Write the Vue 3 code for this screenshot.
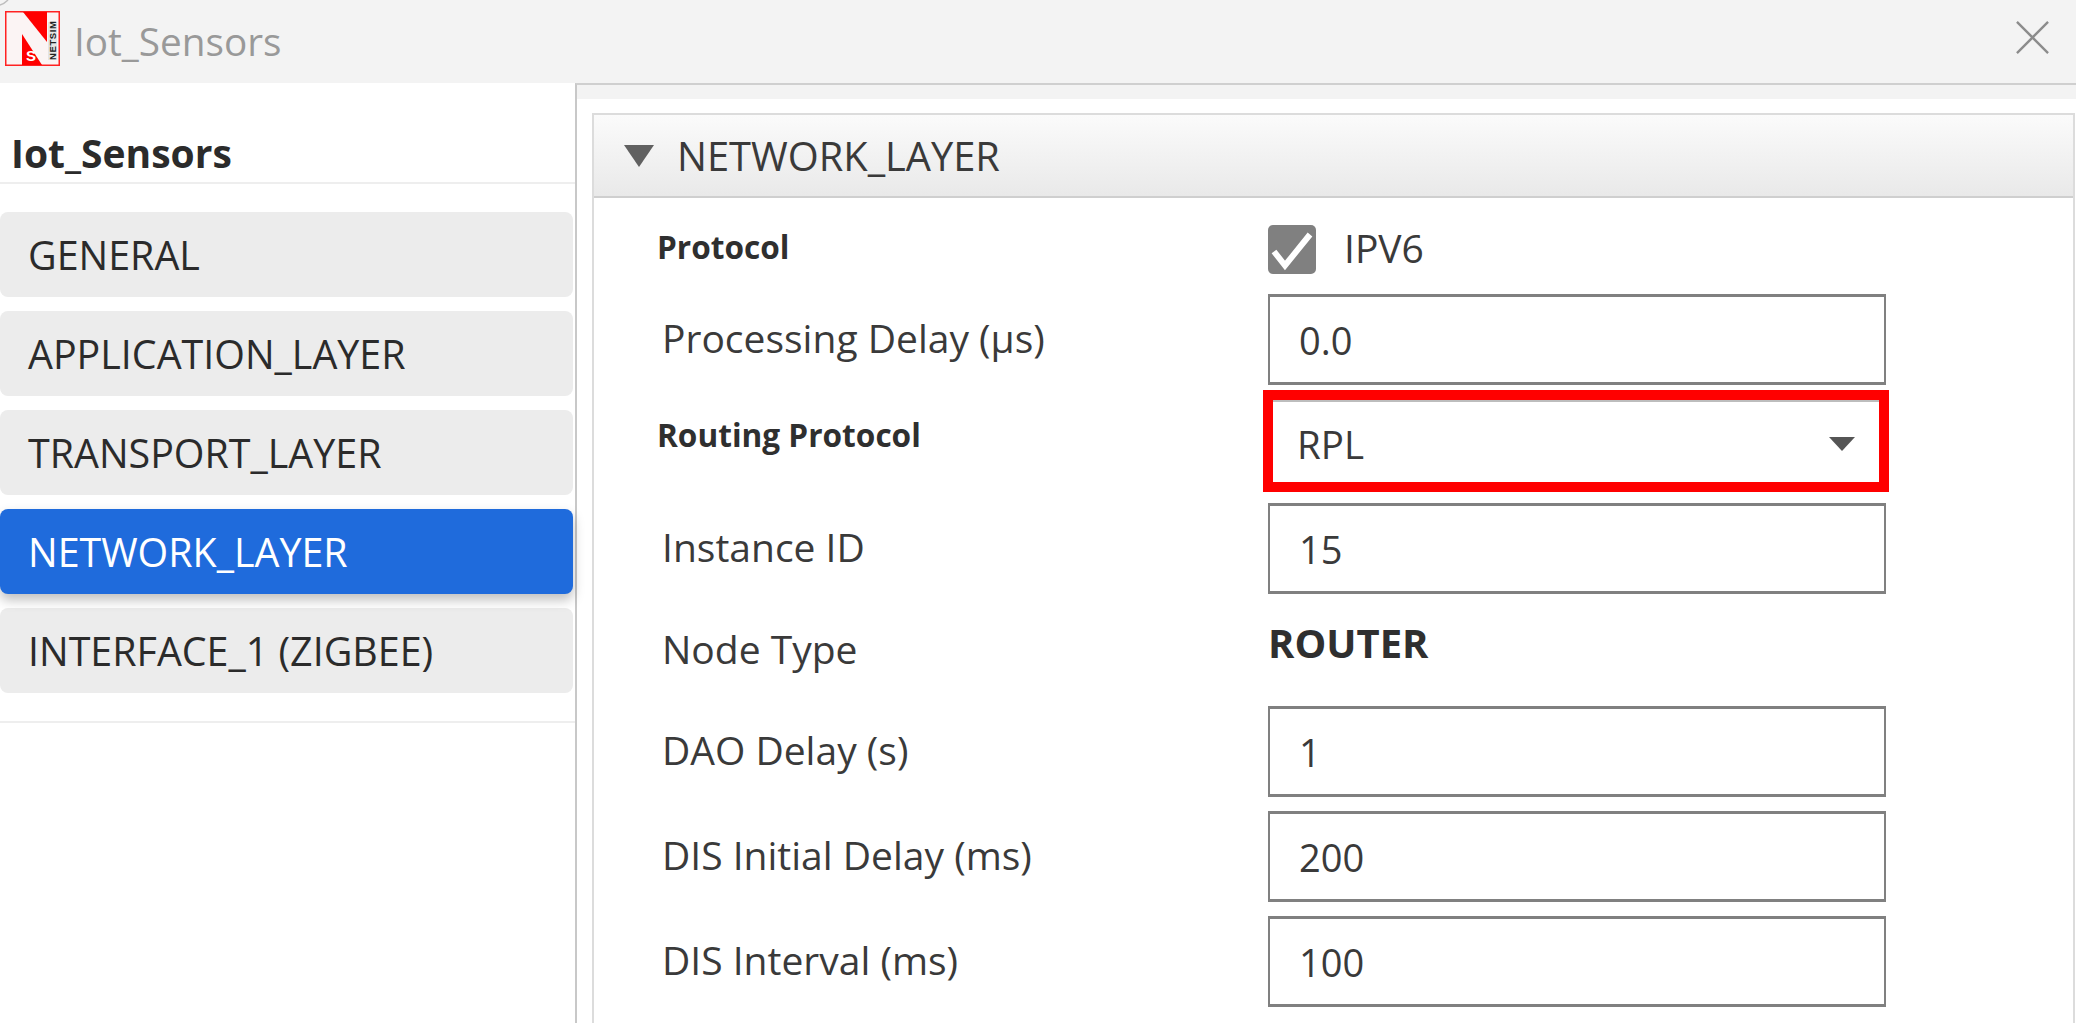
<script setup>
const navItems = [
  { label: 'GENERAL' },
  { label: 'APPLICATION_LAYER' },
  { label: 'TRANSPORT_LAYER' },
  { label: 'NETWORK_LAYER', active: true },
  { label: 'INTERFACE_1 (ZIGBEE)' }
]
</script>

<template>
  <div class="window">
    <header class="titlebar">
      <svg class="corner" viewBox="0 0 10 6" aria-hidden="true">
        <path d="M0 5 Q4 4 8 0" fill="none" stroke="#bdbdbd" stroke-width="1.5" />
      </svg>
      <svg class="logo" viewBox="0 0 55 55" aria-hidden="true">
        <rect x="0.75" y="0.75" width="53.5" height="53.5" fill="#fbf4f4" stroke="#f22" stroke-width="1.5" />
        <path d="M18 1 H42 V31 Z" fill="#f00" />
        <path d="M17 23 L37 54 H17 Z" fill="#f00" />
        <text x="21" y="50" class="logo-s">S</text>
        <rect x="43" y="11" width="9" height="38" fill="#e4e4e4" />
        <text x="0" y="0" class="logo-word" transform="translate(50.5 49) rotate(-90)">NETSIM</text>
      </svg>
      <span class="window-title">Iot_Sensors</span>
      <svg class="close" viewBox="0 0 36 36" aria-hidden="true">
        <path d="M2 2 L34 34 M34 2 L2 34" fill="none" stroke="#8c8c8c" stroke-width="2.4" />
      </svg>
    </header>

    <div class="body">
      <aside class="sidebar">
        <div class="side-head">Iot_Sensors</div>
        <nav class="nav">
          <div v-for="item in navItems" :key="item.label" class="nav-item" :class="{ active: item.active }">
            {{ item.label }}
          </div>
        </nav>
      </aside>

      <main class="pane">
        <div class="pane-strip"></div>
        <section class="panel">
          <div class="panel-head">
            <span class="panel-arrow"></span>
            <span class="panel-title">NETWORK_LAYER</span>
          </div>
          <div class="form">
            <div class="row row-check">
              <label class="lbl bold">Protocol</label>
              <div class="check-wrap">
                <span class="check">
                  <svg viewBox="0 0 48 48" aria-hidden="true">
                    <path d="M6 26 L17 40 L42 9" fill="none" stroke="#fff" stroke-width="6" />
                  </svg>
                </span>
                <span class="check-text">IPV6</span>
              </div>
            </div>
            <div class="row row-input">
              <label class="lbl">Processing Delay (µs)</label>
              <div class="field">0.0</div>
            </div>
            <div class="row row-select">
              <label class="lbl bold up">Routing Protocol</label>
              <div class="highlight">
                <div class="select">
                  <span>RPL</span>
                  <span class="select-arrow"></span>
                </div>
              </div>
            </div>
            <div class="row row-input">
              <label class="lbl">Instance ID</label>
              <div class="field">15</div>
            </div>
            <div class="row row-static">
              <label class="lbl">Node Type</label>
              <div class="static">ROUTER</div>
            </div>
            <div class="row row-input">
              <label class="lbl">DAO Delay (s)</label>
              <div class="field">1</div>
            </div>
            <div class="row row-input">
              <label class="lbl">DIS Initial Delay (ms)</label>
              <div class="field">200</div>
            </div>
            <div class="row row-input">
              <label class="lbl">DIS Interval (ms)</label>
              <div class="field">100</div>
            </div>
          </div>
        </section>
      </main>
    </div>
  </div>
</template>

<style>
html, body { margin: 0; padding: 0; overflow: hidden; background: #fff; }
</style>

<style scoped>
.window {
  width: 2076px;
  height: 1023px;
  overflow: hidden;
  display: flex;
  flex-direction: column;
  font-family: "Open Sans", "Noto Sans", sans-serif;
  color: #333;
  background: #fff;
}
.titlebar {
  flex: 0 0 83px;
  box-sizing: border-box;
  background: #f3f3f3;
  display: flex;
  align-items: center;
  padding: 0 26px 0 5px;
  position: relative;
}
.corner { position: absolute; left: 0; top: 0; width: 10px; height: 6px; }
.logo { width: 55px; height: 55px; margin-bottom: 6px; flex: none; }
.logo-s { font: 700 15px "Liberation Sans", sans-serif; fill: #fff; }
.logo-word { font: 700 9.5px "Liberation Sans", sans-serif; fill: #222; letter-spacing: 0.6px; }
.window-title { margin-left: 14px; font-size: 38.7px; color: #999; margin-bottom: 2px; }
.close { width: 35px; height: 35px; margin-left: auto; margin-bottom: 8px; }

.body { flex: 1; display: flex; min-height: 0; }
.sidebar { flex: 0 0 575px; box-sizing: border-box; }
.side-head {
  height: 101px;
  box-sizing: border-box;
  padding: 48px 0 0 11px;
  font-size: 39px;
  line-height: 44px;
  font-weight: 700;
  color: #2b2b2b;
  border-bottom: 2px solid #eee;
}
.nav {
  display: flex;
  flex-direction: column;
  gap: 14px;
  padding: 28px 0 28px;
  border-bottom: 2px solid #eee;
}
.nav-item {
  box-sizing: border-box;
  height: 85px;
  width: 573px;
  padding-left: 28px;
  display: flex;
  align-items: center;
  background: #ececec;
  border-radius: 8px;
  font-size: 39.4px;
  color: #2b2b2b;
}
.nav-item.active {
  background: #1f6bdc;
  color: #fff;
  box-shadow: 0 6px 12px rgba(0, 0, 0, 0.25);
  position: relative;
}

.pane {
  flex: 1;
  min-width: 0;
  border-left: 2px solid #c8c8c8;
  border-top: 2px solid #cfcfcf;
  display: flex;
  flex-direction: column;
}
.pane-strip { height: 14px; background: #f3f3f3; flex: none; }
.panel {
  flex: 1;
  min-height: 0;
  margin: 14px 1px 0 15px;
  border: 2px solid #dcdcdc;
  border-bottom: 0;
}
.panel-head {
  height: 83px;
  box-sizing: border-box;
  display: flex;
  align-items: center;
  padding-left: 30px;
  background: linear-gradient(#fbfbfb, #e9e9e9);
  border-bottom: 2px solid #cfcfcf;
}
.panel-arrow {
  width: 0;
  height: 0;
  border-left: 15px solid transparent;
  border-right: 15px solid transparent;
  border-top: 22px solid #616161;
}
.panel-title { margin-left: 23px; font-size: 39.8px; color: #3a3a3a; }

.form { padding: 0 0 0 68px; display: flex; flex-direction: column; }
.row {
  display: grid;
  grid-template-columns: 606px 618px;
  align-items: center;
}
.row-check { height: 49px; margin-top: 25px; }
.row-input { height: 91px; }
.row-check + .row-input { margin-top: 22px; }
.row-select { height: 102px; margin: 5px 0 11px; }
.row-static { height: 90px; margin: 11px 0 11px; }
.row-input + .row-input { margin-top: 14px; }
.lbl { font-size: 39px; color: #3a3a3a; white-space: nowrap; transform: translateY(-2px); }
.lbl.bold { font-size: 31.6px; font-weight: 700; color: #2f2f2f; margin-left: -5px; transform: translateY(-3px); }
.lbl.bold.up { transform: translateY(-7px); }

.check-wrap { display: flex; align-items: center; gap: 28px; }
.check {
  width: 48px;
  height: 49px;
  border-radius: 5px;
  background: #808080;
  display: block;
}
.check svg { display: block; width: 48px; height: 49px; }
.check-text { font-size: 39px; color: #3a3a3a; transform: translateY(-2px); }

.field {
  height: 91px;
  box-sizing: border-box;
  border-style: solid;
  border-color: #808080;
  border-width: 3px 2px;
  padding-left: 29px;
  display: flex;
  align-items: center;
  font-size: 38px;
  color: #3a3a3a;
  background: #fff;
}
.highlight {
  box-sizing: border-box;
  height: 102px;
  width: 626px;
  margin-left: -5px;
  border: 10px solid #f00;
}
.select {
  height: 100%;
  box-sizing: border-box;
  padding: 4px 24px 0 24px;
  display: flex;
  align-items: center;
  justify-content: space-between;
  font-size: 38.5px;
  color: #3a3a3a;
  background: #fff;
  border-top: 2px solid #bdbdbd;
}
.select-arrow {
  width: 0;
  height: 0;
  border-left: 13px solid transparent;
  border-right: 13px solid transparent;
  border-top: 14px solid #555;
}
.static { font-size: 40px; font-weight: 700; color: #2f2f2f; transform: translateY(-8px); }
</style>
